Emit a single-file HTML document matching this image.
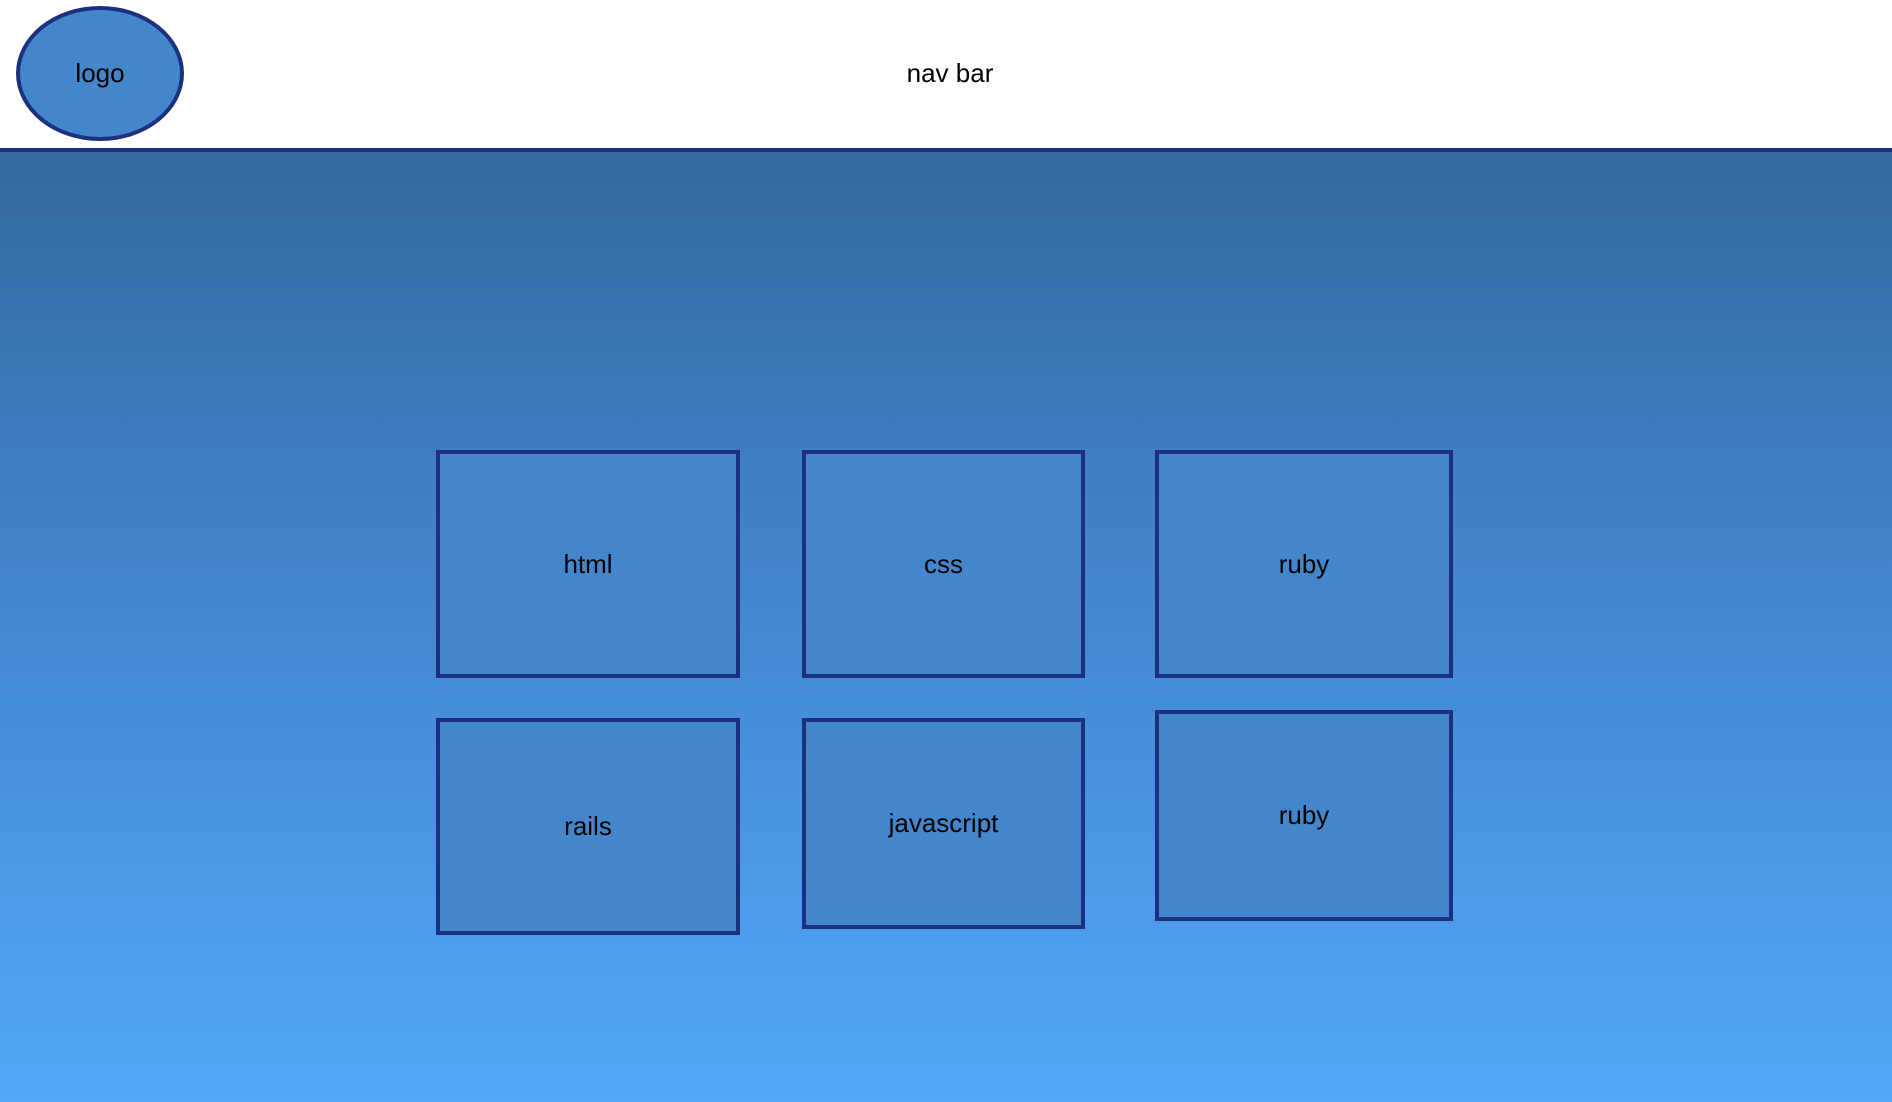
<!DOCTYPE html>
<html><head><style>
html,body{margin:0;padding:0;width:1892px;height:1102px;overflow:hidden;font-family:"Liberation Sans",Arial,sans-serif}
#nav{position:absolute;left:0;top:0;width:1892px;height:148px;background:#fff;border-bottom:4px solid #1d3080}
#main{position:absolute;left:0;top:152px;width:1892px;height:950px;background:linear-gradient(#34699e,#3d7dbf 30%,#4891de 65%,#51a7f9)}
.logo{position:absolute;left:16px;top:6px;width:160px;height:127px;border:4px solid #1d3080;border-radius:50%;background:#4386cb;display:flex;align-items:center;justify-content:center;font-size:26px;color:#000}
.nt{position:absolute;left:850px;width:200px;top:58px;text-align:center;font-size:26px}
.b{position:absolute;box-sizing:border-box;border:4px solid #1d3080;background:#4386cb;display:flex;align-items:center;justify-content:center;font-size:26px;color:#000}
</style></head><body>
<div id="nav"><div class="logo">logo</div><div class="nt">nav bar</div></div>
<div id="main"></div>
<div class="b" style="left:436px;top:450px;width:304px;height:228px">html</div>
<div class="b" style="left:802px;top:450px;width:283px;height:228px">css</div>
<div class="b" style="left:1155px;top:450px;width:298px;height:228px">ruby</div>
<div class="b" style="left:436px;top:718px;width:304px;height:217px">rails</div>
<div class="b" style="left:802px;top:718px;width:283px;height:211px">javascript</div>
<div class="b" style="left:1155px;top:710px;width:298px;height:211px">ruby</div>
</body></html>
